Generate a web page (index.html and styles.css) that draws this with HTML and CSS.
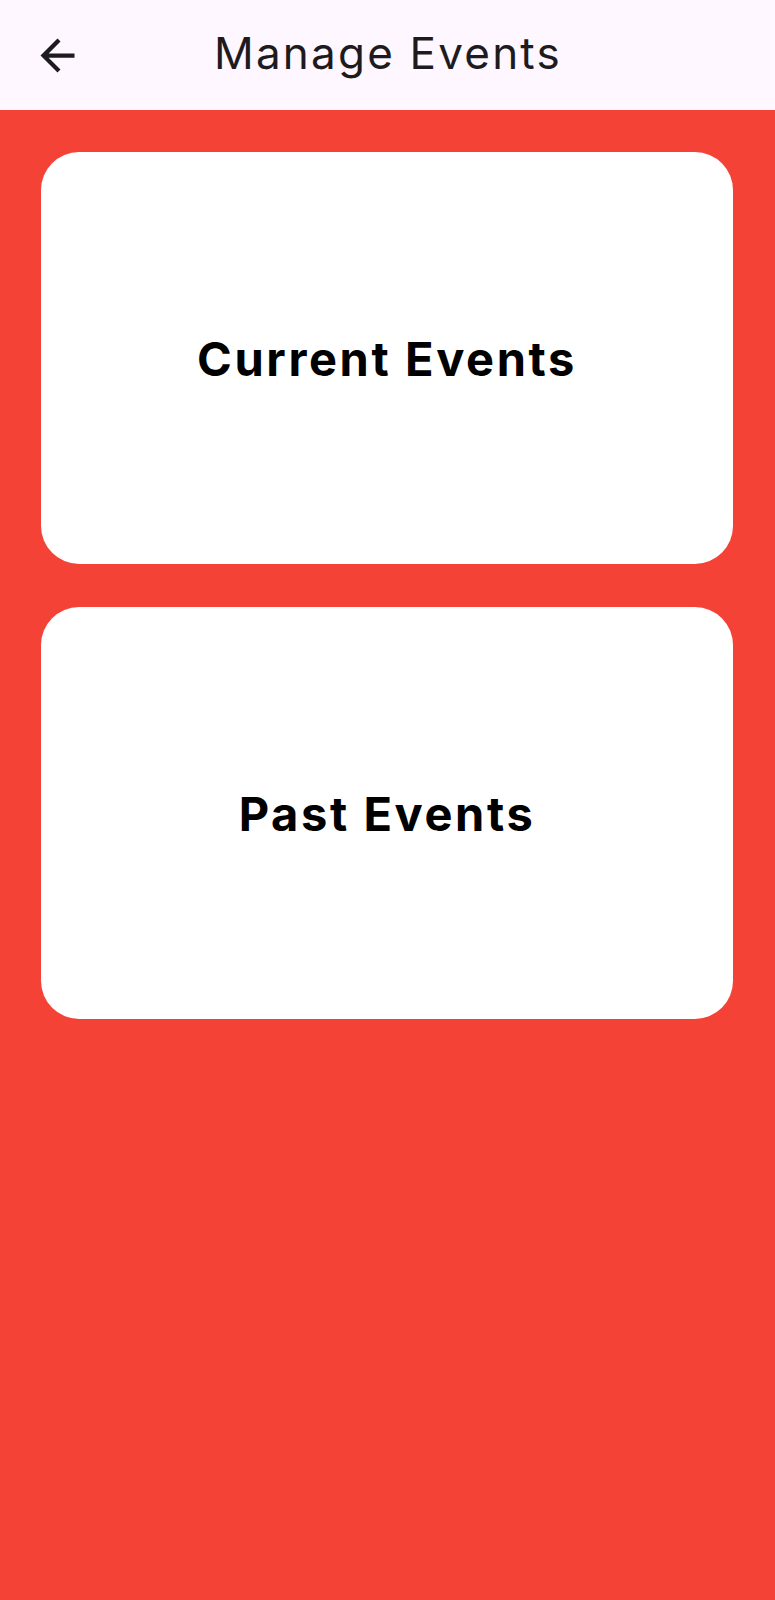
FILE: index.html
```html
<!DOCTYPE html>
<html lang="en">
<head>
<meta charset="utf-8">
<title>Manage Events</title>
<link rel="stylesheet" href="styles.css">
</head>
<body>
<header class="appbar">
  <button class="back" aria-label="Back">
    <svg viewBox="0 0 24 24" width="51" height="51"><path d="M20 11H7.83l5.59-5.59L12 4l-8 8 8 8 1.41-1.41L7.83 13H20v-2z" fill="#1d1b20"/></svg>
  </button>
  <h1 class="title">Manage Events</h1>
</header>
<main class="content">
  <div class="card"><span class="card-label">Current Events</span></div>
  <div class="card"><span class="card-label">Past Events</span></div>
</main>
</body>
</html>
```
FILE: styles.css
```css
* { box-sizing: border-box; }
html, body { margin: 0; padding: 0; }
body {
  width: 775px;
  height: 1600px;
  background: #f44336;
  font-family: "Inter", "Noto Sans", sans-serif;
  display: flex;
  flex-direction: column;
}
.appbar {
  height: 110px;
  background: #fef7ff;
  display: flex;
  align-items: center;
  padding-left: 32px;
}
.back {
  border: 0;
  background: none;
  padding: 0;
  width: 51px;
  height: 51px;
  display: flex;
}
.title {
  margin: -4px 0 0 131px;
  font-weight: 400;
  font-size: 44px;
  color: #1d1b20;
  letter-spacing: 2.2px;
}
.content {
  display: flex;
  flex-direction: column;
  gap: 43px;
  padding: 42px 42px 0 41px;
}
.card {
  height: 412px;
  background: #fff;
  border-radius: 38px;
  display: flex;
  align-items: center;
  justify-content: center;
}
.card-label {
  font-weight: 700;
  font-size: 47px;
  color: #000;
  letter-spacing: 2.6px;
}
```
